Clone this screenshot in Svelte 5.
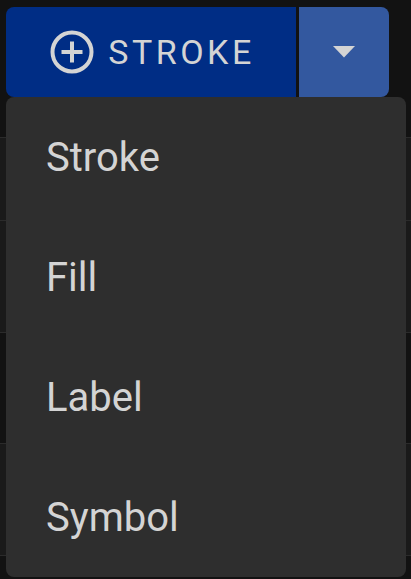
<script>
  const items = ['Stroke', 'Fill', 'Label', 'Symbol'];
  const rows = [
    { h: 83, tone: 'light' },
    { h: 112, tone: 'light' },
    { h: 111, tone: 'dark' },
    { h: 113, tone: 'light' }
  ];
</script>

<div class="page">
  <div class="backdrop">
    {#each rows as r}
      <div class="row {r.tone}" style="height: {r.h}px"></div>
    {/each}
  </div>

  <div class="overlay">
    <div class="split">
      <button class="main">
        <svg class="plus" viewBox="0 0 44 44" width="44" height="44" fill="none" stroke="#d4d4d4" aria-hidden="true">
          <circle cx="22" cy="22" r="19.5" stroke-width="4" />
          <path d="M22 11.5v21M11.5 22h21" stroke-width="4" />
        </svg>
        <span>STROKE</span>
      </button>
      <button class="caret" aria-label="More">
        <svg viewBox="0 0 22 12" width="22" height="12" aria-hidden="true">
          <path d="M0 0h22L11 11.5z" fill="#d4d4d4" />
        </svg>
      </button>
    </div>
    <ul class="menu">
      {#each items as item}
        <li>{item}</li>
      {/each}
    </ul>
  </div>
</div>

<style>
  :global(body) {
    margin: 0;
    background: #121212;
  }
  .page {
    position: relative;
    width: 411px;
    height: 579px;
    overflow: hidden;
    background: #121212;
    font-family: Roboto, sans-serif;
  }
  .backdrop {
    padding-top: 137px;
  }
  .row {
    border-top: 1px solid #2b2b2b;
    box-sizing: border-box;
  }
  .row:last-child {
    border-bottom: 1px solid #2b2b2b;
  }
  .light {
    background: #1a1a1a;
  }
  .dark {
    background: #121212;
  }
  .overlay {
    position: absolute;
    left: 6px;
    top: 7px;
    width: 400px;
  }
  .split {
    display: flex;
    gap: 3px;
    width: 383px;
    height: 90px;
  }
  button {
    border: 0;
    padding: 0;
    color: #d4d4d4;
    font: inherit;
  }
  .main {
    flex: 1;
    display: flex;
    align-items: center;
    justify-content: center;
    gap: 14px;
    padding-left: 3px;
    background: #002d85;
    border-radius: 8px 0 0 8px;
    font-size: 34px;
    letter-spacing: 3.5px;
    line-height: 1;
  }
  .plus {
    flex: none;
  }
  .caret {
    width: 90px;
    display: flex;
    align-items: center;
    justify-content: center;
    background: #33589f;
    border-radius: 0 8px 8px 0;
  }
  .menu {
    list-style: none;
    margin: 0;
    padding: 0;
    background: #2e2e2e;
    border-radius: 8px;
    color: #d4d4d4;
    font-size: 40px;
  }
  .menu li {
    height: 120px;
    display: flex;
    align-items: center;
    padding-left: 40px;
  }
</style>
